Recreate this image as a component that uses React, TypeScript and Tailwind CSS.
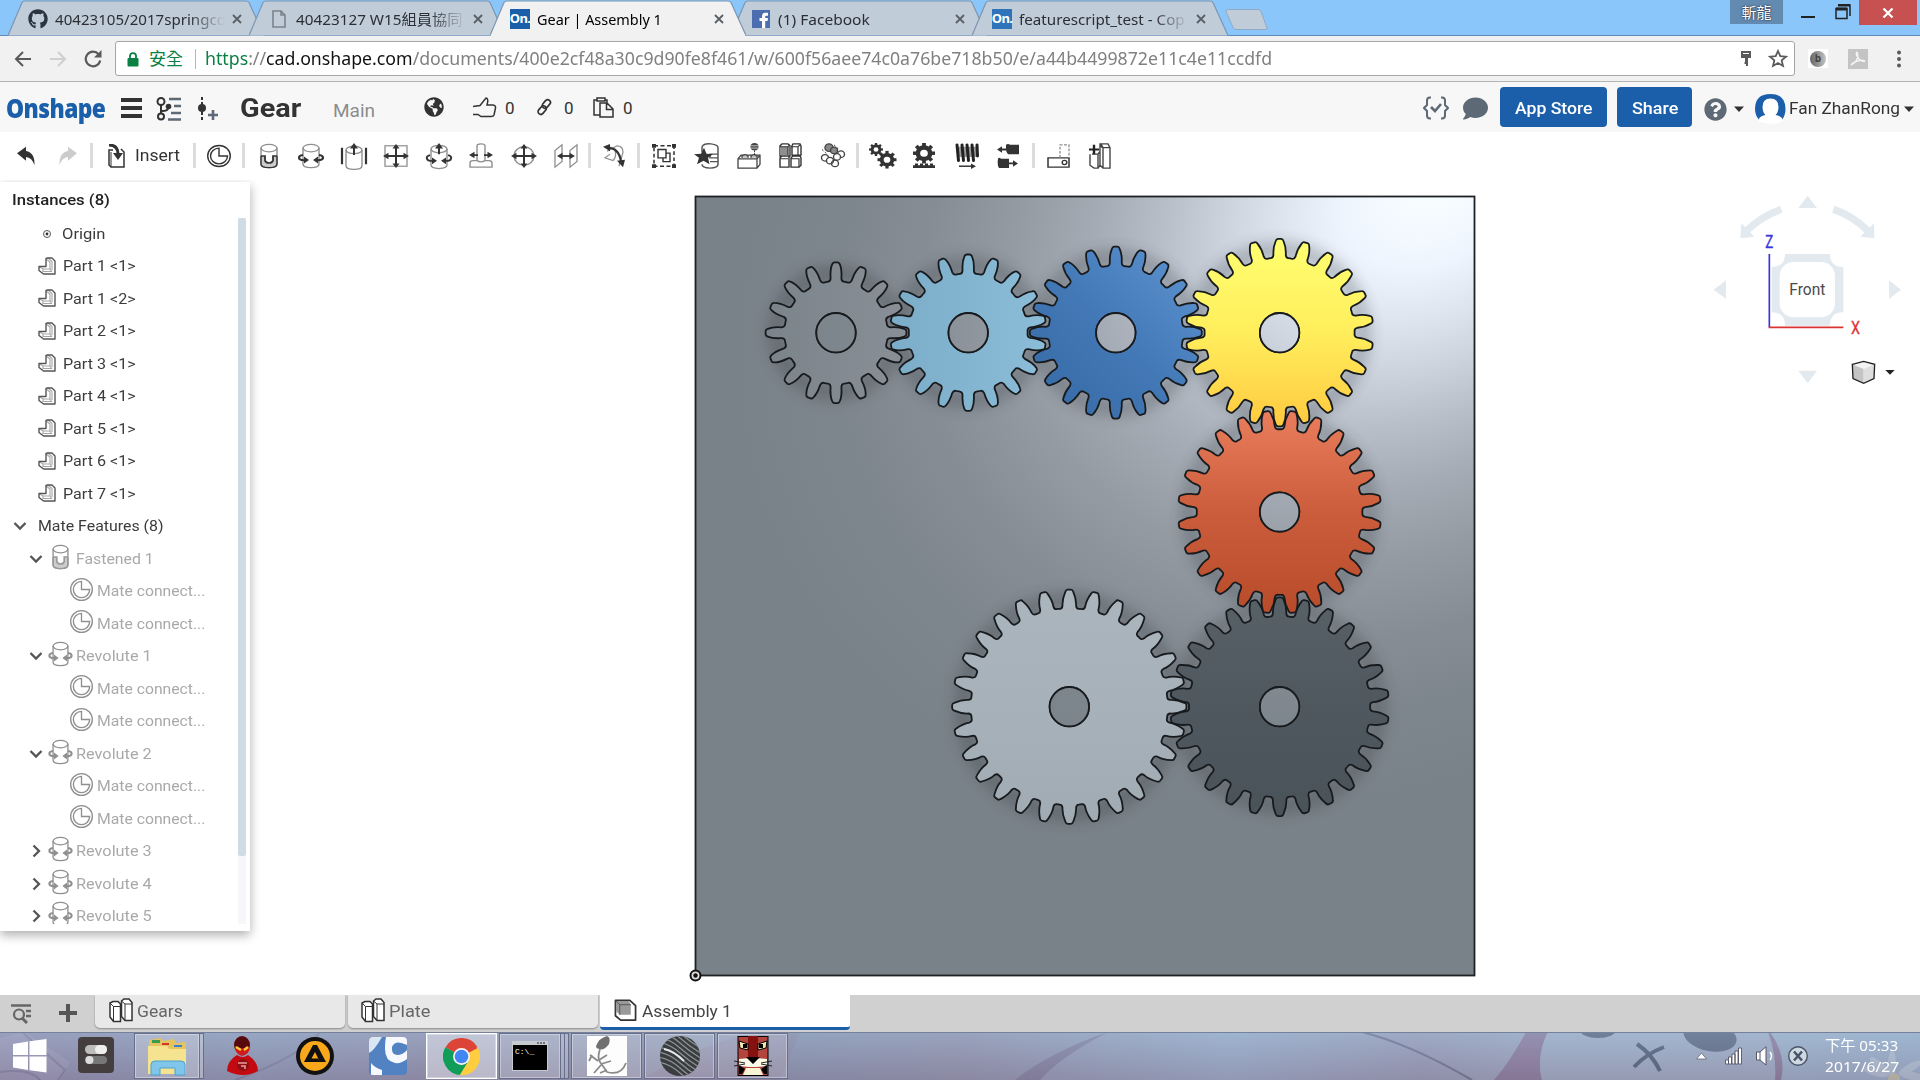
import React, { useLayoutEffect, useRef, useState } from "react";
import { FaGithub, FaGlobeAmericas, FaQuestionCircle, FaComment } from "react-icons/fa";

const UI = "font-['Roboto','Noto_Sans',sans-serif]";
const WIN = "font-['Noto_Sans','Noto_Sans_CJK_TC',sans-serif]";

/* Text fitted to a given advance width. */
function Fit({ w, className = "", children }: { w: number; className?: string; children: React.ReactNode }) {
  const ref = useRef<HTMLSpanElement>(null);
  const [s, setS] = useState(1);
  useLayoutEffect(() => {
    if (ref.current) setS(w / ref.current.offsetWidth);
  }, [w]);
  return (
    <span className={"inline-block shrink-0 whitespace-nowrap " + className} style={{ width: w }}>
      <span ref={ref} className="inline-block origin-left" style={{ transform: `scaleX(${s})` }}>
        {children}
      </span>
    </span>
  );
}

/* ---------- Browser tabs ---------- */

function OnIcon({ className = "" }: { className?: string }) {
  return (
    <span className={"flex h-[20px] w-[20px] items-center justify-center text-[13px] font-bold leading-none tracking-tighter text-white " + className}>
      On.
    </span>
  );
}

function Tab({ active, icon, label, w, fade, first }: { active?: boolean; icon: React.ReactNode; label: string; w: number; fade?: boolean; first?: boolean }) {
  return (
    <div className={"relative h-[36px] w-[256px] shrink-0 " + (first ? "" : "-ml-[15px] ") + (active ? "z-10" : "")}>
      <svg className="absolute inset-0" width="256" height="36" viewBox="0 0 256 36">
        <path d="M0 35.5 L14 2.5 Q15 1 17 1 H238 Q240 1 241 2.5 L256 35.5" fill={active ? "#f1f1f1" : "#c1ccd9"} stroke="#7c95b1" strokeWidth="1.2" />
        {active && <path d="M1 35.5H255" stroke="#f1f1f1" strokeWidth="2" />}
      </svg>
      <div className="relative flex h-[36px] items-center pl-[20px] pt-[1px]">
        <div className="flex w-[20px] items-center justify-center">{icon}</div>
        <div className="ml-[7px] w-[170px] overflow-hidden">
          <Fit w={w} className={"text-[15px] " + (active ? "text-black" : "text-[#2b2f35]")}>{label}</Fit>
        </div>
        {fade && <div className="relative -ml-[36px] h-[24px] w-[36px] bg-gradient-to-r from-[#c1ccd9]/0 to-[#c1ccd9]" />}
        <svg className="ml-[7px]" width="10" height="10" viewBox="0 0 10 10">
          <path d="M1 1L9 9M9 1L1 9" stroke="#5a5f66" strokeWidth="1.8" />
        </svg>
      </div>
    </div>
  );
}

function TabStrip() {
  return (
    <div className={"flex h-[36px] items-start border-b border-[#6189b8] bg-[#8bc6fa] pl-[8px] " + WIN}>
      <Tab first icon={<FaGithub className="text-[20px] text-[#2b3542]" />} label="40423105/2017springcd" w={171} fade />
      <Tab
        icon={
          <svg width="14" height="18" viewBox="0 0 14 18"><path d="M1 1h8l4 4v12H1zM9 1v4h4" fill="none" stroke="#7b828b" strokeWidth="1.6" /></svg>
        }
        label="40423127 W15組員協同"
        w={167}
        fade
      />
      <Tab active icon={<OnIcon className="bg-[#1b5faa]" />} label="Gear | Assembly 1" w={125} />
      <Tab
        icon={
          <svg width="18" height="18" viewBox="0 0 18 18"><rect width="18" height="18" fill="#4c6eb0" /><path d="M10 18V11H7.5V8H10V6.2Q10 2.8 13.3 2.8H16V5.8H14.2Q13.2 5.8 13.2 6.8V8H16L15.5 11H13.2V18Z" fill="#fff" /></svg>
        }
        label="(1) Facebook"
        w={92}
      />
      <Tab icon={<OnIcon className="bg-[#2f74bb]" />} label="featurescript_test - Cop" w={166} fade />
      <svg className="mt-[8px] -ml-[4px]" width="46" height="23" viewBox="0 0 46 23">
        <path d="M4 1.5H34Q36 1.5 37 3.5L43 20Q43.500 21.500 42 21.500H12Q10 21.500 9 19.500L2 3.500Q1.500 1.500 4 1.500Z" fill="#c1ccd9" stroke="#8fa9c6" />
      </svg>
      <div className="ml-auto flex items-start">
        <div className="flex h-[24px] w-[53px] items-center justify-center bg-[#638bb1] text-[15px] text-white [text-shadow:0_0_2px_#000]">斬龍</div>
        <div className="ml-[18px] mt-[16px] h-[2px] w-[14px] bg-[#222]" />
        <svg className="ml-[20px] mt-[4px]" width="16" height="16" viewBox="0 0 16 16">
          <path d="M3 1H15V12M1 4.500H12V14.500H1Z" fill="none" stroke="#222" strokeWidth="1.500" /><path d="M1 5H12M3 1H15" stroke="#222" strokeWidth="3" />
        </svg>
        <div className="ml-[8px] mr-[3px] flex h-[25px] w-[58px] items-center justify-center bg-[#c75050]">
          <svg width="12" height="10" viewBox="0 0 12 10"><path d="M1.500 0.500L10.500 9.500M10.500 0.500L1.500 9.500" stroke="#fff" strokeWidth="2.200" /></svg>
        </div>
      </div>
    </div>
  );
}

function AddressBar() {
  return (
    <div className={"flex h-[46px] items-center border-b border-[#b3b3b3] bg-[#f1f1f1] " + WIN}>
      <svg className="ml-[14px]" width="18" height="18" viewBox="0 0 18 18"><path d="M17 9H2M9 2L2 9L9 16" fill="none" stroke="#5a5a5a" strokeWidth="2" /></svg>
      <svg className="ml-[17px]" width="18" height="18" viewBox="0 0 18 18"><path d="M1 9H16M9 2L16 9L9 16" fill="none" stroke="#cfcfcf" strokeWidth="2" /></svg>
      <svg className="ml-[16px]" width="20" height="20" viewBox="0 0 20 20"><path d="M15.600 5.200A7.300 7.300 0 1 0 17.200 11.500" fill="none" stroke="#5a5a5a" strokeWidth="2.200" /><path d="M18.500 1V8.500H11Z" fill="#5a5a5a" /></svg>
      <div className="ml-[12px] flex h-[35px] w-[1680px] items-center rounded-[3px] border border-[#a6a6a6] bg-white">
        <svg className="ml-[11px] mt-[2px]" width="12" height="15" viewBox="0 0 12 15"><path d="M3 7V4Q3 1.200 6 1.200T9 4V7" fill="none" stroke="#0b8043" strokeWidth="1.800" /><rect x="0.500" y="6" width="11" height="8.500" rx="1" fill="#0b8043" /></svg>
        <Fit w={34} className="ml-[10px] text-[17px] text-[#0b8043]">安全</Fit>
        <div className="ml-[12px] h-[20px] w-px bg-[#b5b5b5]" />
        <Fit w={1067} className="ml-[9px] text-[18px] text-[#808080]">
          <span className="text-[#0b8043]">https</span>://<span className="text-[#111]">cad.onshape.com</span>/documents/400e2cf48a30c9d90fe8f461/w/600f56aee74c0a76be718b50/e/a44b4499872e11c4e11ccdfd
        </Fit>
        <svg className="ml-auto" width="12" height="18" viewBox="0 0 12 18"><path d="M1 1H11V8H8V16H6V14H4.500V12H5V8H1Z" fill="#5a5a5a" /><path d="M3 3.500H9" stroke="#fff" /></svg>
        <svg className="ml-[16px] mr-[6px]" width="20" height="19" viewBox="0 0 20 19"><path d="M10 2L12.300 7.200L18 7.700L13.700 11.400L15 17L10 14L5 17L6.300 11.400L2 7.700L7.700 7.200Z" fill="none" stroke="#5a5a5a" strokeWidth="1.800" /></svg>
      </div>
      <div className="ml-[13px] flex h-[19px] w-[20px] items-center justify-center bg-white">
        <div className="flex h-[16px] w-[16px] items-center justify-center rounded-full bg-gradient-to-r from-[#666] to-[#c4c4c4] text-[10px] font-bold text-[#444]">b</div>
      </div>
      <svg className="ml-[20px]" width="20" height="20" viewBox="0 0 20 20"><rect width="20" height="20" fill="#c4c4c4" /><path d="M3 16Q11 12 9.500 4Q8 2 8.500 6Q11 12 16.500 12.500Q17 11 12 11.500Q6 12.500 3 16Z" fill="none" stroke="#f4f4f4" strokeWidth="1.500" /></svg>
      <svg className="ml-[28px]" width="6" height="18" viewBox="0 0 6 18"><circle cx="3" cy="2.500" r="2" fill="#5a5a5a" /><circle cx="3" cy="9" r="2" fill="#5a5a5a" /><circle cx="3" cy="15.500" r="2" fill="#5a5a5a" /></svg>
    </div>
  );
}

/* ---------- Document header ---------- */

function Caret({ className = "" }: { className?: string }) {
  return <svg className={"shrink-0 " + className} width="10" height="6" viewBox="0 0 10 6"><path d="M0 0.500H10L5 6Z" fill="#333" /></svg>;
}

function DocHeader() {
  return (
    <div className={"flex h-[50px] items-center bg-[#f7f7f7] text-[#333] " + UI}>
      <Fit w={99} className="ml-[6px] mt-[2px] font-['Open_Sans','Noto_Sans',sans-serif] text-[26px] font-extrabold leading-none tracking-tight text-[#1b5faa]">Onshape</Fit>
      <div className="ml-[16px] mt-[2px] flex w-[21px] flex-col gap-[4px]">
        <div className="h-[4px] bg-[#333]" /><div className="h-[4px] bg-[#333]" /><div className="h-[4px] bg-[#333]" />
      </div>
      <svg className="ml-[14px] mt-[3px]" width="26" height="24" viewBox="0 0 26 24">
        <g fill="none" stroke="#333" strokeWidth="2"><circle cx="5" cy="4.500" r="3.500" /><circle cx="5" cy="19.500" r="3" /><path d="M5 8V17M6 14Q12 14 12 11" /></g><circle cx="12.500" cy="9.500" r="2.800" fill="#333" />
        <path d="M13 2H25M18 9H25M15 16H25M12 22.500H25" stroke="#5d6a75" strokeWidth="2.400" />
      </svg>
      <svg className="ml-[15px] mt-[3px]" width="22" height="24" viewBox="0 0 22 24">
        <path d="M5 0V24" stroke="#333" strokeWidth="2" strokeDasharray="3 2" /><circle cx="5" cy="11" r="4" fill="#333" /><path d="M11 18H21M16 13V23" stroke="#5d6a75" strokeWidth="2.600" />
      </svg>
      <Fit w={61} className="ml-[21px] mt-[2px] text-[26px] font-bold leading-none">Gear</Fit>
      <Fit w={42} className="ml-[32px] mt-[7px] text-[19px] leading-none text-[#8c8c8c]">Main</Fit>
      <FaGlobeAmericas className="ml-[49px] text-[20px]" />
      <svg className="ml-[28px]" width="25" height="21" viewBox="0 0 25 21"><path d="M1 9.500L8 8.500L14 1Q17 1.500 15 8H21Q24 8.500 23.500 11L22 18Q21.500 19.500 19 19.500H9L6 17.500H1" fill="none" stroke="#333" strokeWidth="1.500" /></svg>
      <Fit w={10} className="ml-[8px] mt-[3px] text-[17px]">0</Fit>
      <svg className="ml-[21px]" width="16" height="18" viewBox="0 0 16 18"><g fill="none" stroke="#333" strokeWidth="1.700"><rect x="7.500" y="1" width="5.500" height="9.500" rx="2.700" transform="rotate(40 10 6)" /><rect x="3.500" y="7.500" width="5.500" height="9.500" rx="2.700" transform="rotate(40 6.500 12)" /></g></svg>
      <Fit w={10} className="ml-[12px] mt-[3px] text-[17px]">0</Fit>
      <svg className="ml-[19px]" width="21" height="21" viewBox="0 0 21 21"><g fill="none" stroke="#333" strokeWidth="1.500"><path d="M7 18H1V3H4M12 3H14V6M4 1H12V4H4ZM7 6H14L20 12V20H7ZM13.500 6V12.500H20" /></g></svg>
      <Fit w={10} className="ml-[9px] mt-[3px] text-[17px]">0</Fit>

      <div className="ml-auto flex items-center">
        <svg className="mt-[2px]" width="26" height="24" viewBox="0 0 26 24"><path d="M8 1.500H7Q4 1.500 4 4.500V9L1 12L4 15V19.500Q4 22.500 7 22.500H8M18 1.500H19Q22 1.500 22 4.500V9L25 12L22 15V19.500Q22 22.500 19 22.500H18" fill="none" stroke="#5d6a75" strokeWidth="2" /><path d="M8 11L12 15L18 8" fill="none" stroke="#5d6a75" strokeWidth="2.600" /></svg>
        <FaComment className="ml-[14px] mt-[3px] text-[25px] text-[#5d6a75]" />
        <div className="ml-[12px] flex h-[40px] w-[107px] items-center justify-center rounded-[4px] bg-[#1b5faa] pt-[3px] text-white"><Fit w={77} className="text-[16px] font-medium">App Store</Fit></div>
        <div className="ml-[10px] flex h-[40px] w-[75px] items-center justify-center rounded-[4px] bg-[#1b5faa] pt-[3px] text-white"><Fit w={46} className="text-[16px] font-medium">Share</Fit></div>
        <FaQuestionCircle className="ml-[12px] mt-[4px] text-[23px] text-[#5d6a75]" />
        <Caret className="ml-[7px] mt-[3px]" />
        <svg className="ml-[11px] mt-[4px]" width="31" height="30" viewBox="0 0 31 30"><path d="M4 26Q0 21 0 15Q0 0 15.500 0Q30.500 0 30.500 15Q30.500 21 27 26Z" fill="#1b5faa" /><path d="M15.500 4.500Q23.500 4.500 23.500 13Q23.500 18 20.500 21Q27 22 28 27Q22 30 15.500 30T3 27Q4 22 10.500 21Q7.500 18 7.500 13Q7.500 4.500 15.500 4.500Z" fill="#fff" /></svg>
        <Fit w={111} className="ml-[3px] mt-[4px] text-[16.500px]">Fan ZhanRong</Fit>
        <Caret className="ml-[4px] mr-[6px] mt-[4px]" />
      </div>
    </div>
  );
}

/* ---------- Tool icons ---------- */

const D = "#333";
const G = "#8f8f8f";

function Ico({ className = "", children }: { className?: string; children: React.ReactNode }) {
  return <svg className={"-mt-[1px] shrink-0 overflow-visible " + className} width="24" height="26" viewBox="0 0 24 28" preserveAspectRatio="none" fill="none">{children}</svg>;
}
const Sep = ({ className }: { className: string }) => <div className={"-mt-[1px] h-[25px] w-[3px] shrink-0 bg-[#dcdcdc] " + className} />;

function Cyl({ c = G }: { c?: string }) {
  return <g stroke={c} strokeWidth="1.400"><ellipse cx="12" cy="5.500" rx="8" ry="4" /><path d="M4 5.500V22.500Q4 26.500 12 26.500T20 22.500V5.500" /></g>;
}
function FastenedArt({ c = D }: { c?: string }) {
  return <><path d="M4 14V22.500Q4 26.500 12 26.500T20 22.500V14H16V19Q15 21 12 21T8 19V14Z" fill="#ccc" /><Cyl /><path d="M4 14H8V19Q9 21.500 12 21.500T16 19V14H20" stroke={c} strokeWidth="1.800" /><path d="M4 14V22.500Q4 26.500 12 26.500T20 22.500V14" stroke={c} strokeWidth="1.300" /></>;
}
function RevoluteArt({ c = D }: { c?: string }) {
  return <><Cyl c={c === D ? G : c} /><path d="M4 13Q0 13.500 0 16T5 18.500M20 13Q24 13.500 24 16T19 18.500" stroke={c} strokeWidth="2.200" /><path d="M5 14.500L10 18.300L5 22ZM19 14.500L14 18.300L19 22Z" fill={c} /></>;
}
function MateArt({ c = D }: { c?: string }) {
  return <g stroke={c} strokeWidth="1.400"><circle cx="12" cy="14" r="11.300" /><path d="M12 5.500V14H20.500A8.500 8.500 0 1 1 12 5.500Z" /></g>;
}
function Cog({ x, y, r, n }: { x: number; y: number; r: number; n: number }) {
  return <g transform={`translate(${x} ${y})`}><circle r={r * 0.56} stroke={D} strokeWidth={r * 0.42} />{Array.from({ length: n }, (_, i) => <rect key={i} x={-r * 0.17} y={-r} width={r * 0.34} height={r * 0.42} fill={D} transform={`rotate(${(i * 360) / n})`} />)}</g>;
}
const Four = () => <><path d="M12 4V24M2 14H22" stroke={D} strokeWidth="2" /><path d="M12 1L15.500 6H8.500ZM12 27L15.500 22H8.500ZM-1 14L4.500 10.500V17.500ZM25 14L19.500 10.500V17.500Z" fill={D} /></>;

function ToolBar() {
  return (
    <div className={"flex h-[48px] items-center text-[#333] " + UI}>
      <Ico className="ml-[15px]"><path d="M2 11L11 4V8.500Q20 10 19.500 24Q17 15.500 11 15V19Z" fill={D} /></Ico>
      <Ico className="ml-[16px]"><path d="M22 11L13 4V8.500Q4 10 4.500 24Q7 15.500 13 15V19Z" fill="#ccc" /></Ico>
      <Sep className="ml-[11px]" />
      <svg className="-mt-[1px] ml-[15px]" width="18" height="24" viewBox="0 0 18 24" fill="none"><path d="M5 6H1V21L3 23H16V8L13 5" stroke={D} strokeWidth="1.500" /><path d="M3 8V23" stroke={D} /><path d="M1 1Q10 1 10 10" stroke={D} strokeWidth="3" /><path d="M5 9H15L10 16Z" fill={D} /></svg>
      <Fit w={45} className="ml-[9px] text-[16px]">Insert</Fit>
      <Sep className="ml-[13px]" />
      <Ico className="ml-[11px]"><MateArt /></Ico>
      <Sep className="ml-[11px]" />
      <Ico className="ml-[12px]"><FastenedArt /></Ico>
      <Ico className="ml-[18px]"><RevoluteArt /></Ico>
      <Ico className="ml-[19px]"><g transform="translate(0 2)"><Cyl /></g><path d="M0 5V23M24 5V23" stroke={D} strokeWidth="2.200" /><path d="M12 13V4" stroke={D} strokeWidth="2" /><path d="M12 0L16 6H8Z" fill={D} /></Ico>
      <Ico className="ml-[18px]"><rect x="1" y="3" width="22" height="22" stroke={G} strokeWidth="1.300" /><Four /></Ico>
      <Ico className="ml-[19px]"><g transform="translate(0 1)"><Cyl /></g><path d="M3 13Q-1 14 0 17T5 19M21 13Q25 14 24 17T19 19M12 12V5" stroke={D} strokeWidth="2" /><path d="M12 0L16 6H8ZM5 15.500L10 19L5 23ZM19 15.500L14 19L19 23Z" fill={D} /></Ico>
      <Ico className="ml-[18px]"><path d="M8 3Q8 1 12 1T16 3V19H20Q23 19 23 22V26H1V22Q1 19 4 19H8ZM8 19Q12 21.500 16 19" stroke={G} strokeWidth="1.400" /><path d="M4 13H9M15 13H20" stroke={D} strokeWidth="2" /><path d="M0 13L5.500 9.500V16.500ZM24 13L18.500 9.500V16.500Z" fill={D} /></Ico>
      <Ico className="ml-[19px]"><circle cx="12" cy="14" r="10" stroke={G} strokeWidth="1.400" /><Four /></Ico>
      <Ico className="ml-[18px]"><path d="M1 8L8 2V20L1 26ZM16 8L23 2V20L16 26Z" stroke={G} strokeWidth="1.300" /><path d="M5 14H19" stroke={D} strokeWidth="2" /><path d="M3 14L8.500 10.500V17.500ZM21 14L15.500 10.500V17.500Z" fill={D} /></Ico>
      <Sep className="ml-[10px]" />
      <Ico className="ml-[12px]"><path d="M4 9L14 3Q20 3 20 10L16 25M7 12L2 16L10 19Q14 14 12 8" stroke={G} strokeWidth="1.300" /><path d="M4 5Q16 5 18 20" stroke={D} strokeWidth="2.200" /><path d="M0 4L7 1V9ZM20 26L14 19L22 18Z" fill={D} /></Ico>
      <Sep className="ml-[10px]" />
      <Ico className="ml-[12px]"><rect x="2" y="3" width="20" height="22" stroke={D} strokeWidth="1.500" strokeDasharray="4 2.500" /><path d="M0 1h4v4H0zM20 1h4v4h-4zM0 23h4v4H0zM20 23h4v4h-4z" fill={D} /><path d="M6 7H14V16H6ZM14 11H18V20H11V16" stroke={D} strokeWidth="1.400" /></Ico>
      <Ico className="ml-[20px]"><path d="M6 4Q8 0 15 1T22 5V23Q22 27 14 27T6 23M6 4V10M22 12H14V16H22M22 20H14" stroke="#555" strokeWidth="1.500" /><path d="M8 5L10.500 11.500L17 12L12 16L13.500 23L7.500 19L1 23L3 16L-2 12L5 11.500Z" fill={D} /></Ico>
      <Ico className="ml-[17px]"><path d="M1 17L4 13H23V23L20 27H1ZM1 17H20V27M20 17L23 13" stroke="#444" strokeWidth="1.300" /><path d="M5 16V14Q8 11 11 14V16M14 16V14Q17 11 20 14V16" stroke="#444" strokeWidth="1.400" fill="#bbb" /><circle cx="17.500" cy="4" r="4" fill="#444" /><path d="M14 3H21M14 5.500H21" stroke="#fff" strokeWidth=".7" /><path d="M17.500 8V13" stroke={D} strokeDasharray="2 1" /></Ico>
      <Ico className="ml-[17px]"><path d="M2 3L4 1H10L12 3V14H2ZM14 3L15 1H22L23 3V13H14ZM2 16L4 14H11V26H2ZM13 16L15 14H22L23 16V24L21 26H13Z" stroke={D} strokeWidth="1.400" /><path d="M2 4H10V13H2Z" fill="#8f8f8f" /><path d="M2 4H10V13M13 4H20V13M2 17H10M13 17H21V26M10 4L12 2M20 4L22 2" stroke={D} strokeWidth="1.200" /></Ico>
      <Ico className="ml-[19px]"><g stroke="#444" strokeWidth="1.400"><circle cx="8" cy="5" r="4" fill="#888" /><circle cx="13" cy="8" r="3.500" fill="#888" /><circle cx="20" cy="12" r="3.500" /><circle cx="16" cy="15" r="3.500" fill="#fff" /><circle cx="4" cy="16" r="3.500" /><circle cx="9" cy="19" r="3.500" fill="#fff" /><circle cx="14" cy="22" r="3.500" /></g><path d="M1 7L6 12M13 2L18 7" stroke={D} strokeDasharray="2 2" /></Ico>
      <Sep className="ml-[11px]" />
      <Ico className="ml-[12px]"><Cog x={5} y={7} r={7} n={8} /><Cog x={16} y={18} r={9.5} n={8} /></Ico>
      <Ico className="ml-[17px]"><Cog x={12} y={11} r={11} n={8} /><path d="M1 27V24H3V22H6V24H8V22H11V24H13V22H16V24H18V22H21V24H23V27Z" fill={D} /></Ico>
      <Ico className="ml-[19px]"><path d="M2 4H22V15H2Z" fill="#999" /><path d="M2 2L3.500 19M7 2L8.500 19M12 2L13.500 19M17 2L18.500 19M22 2L22.500 14" stroke="#222" strokeWidth="3" strokeLinecap="round" /><path d="M4 25H17" stroke={D} strokeWidth="1.600" /><path d="M21 25L16 22V28Z" fill={D} /></Ico>
      <Ico className="ml-[18px]"><path d="M9 2Q11 0 13 2H22V12H11Q9 10 9 7ZM1 17Q2 15 4 17H12V27H2Q0 24 1 17Z" fill={D} /><path d="M3 7H9M12 22H18" stroke={D} strokeWidth="2" /><path d="M0 7L5 3.500V10.500ZM21 22L16 18.500V25.500Z" fill={D} /></Ico>
      <Sep className="ml-[11px]" />
      <Ico className="ml-[12px]"><path d="M1 16H22V26H1Z" stroke={D} strokeWidth="1.500" /><path d="M13 16V2H22V16" stroke={G} strokeWidth="1.300" strokeDasharray="3 1.500" /><circle cx="17.500" cy="21" r="2.300" stroke={D} strokeWidth="1.400" /></Ico>
      <Ico className="ml-[18px]"><path d="M3 12H9V27H5L1 24V12M9 12L11 9V24L9 27M13 5L11 2V24L14 27H21V5L19 1H12L14 5H21M14 5V27" stroke="#444" strokeWidth="1.400" /><path d="M0 7H10M5 2V12" stroke="#222" strokeWidth="2.400" /></Ico>
    </div>
  );
}

/* ---------- Instance list ---------- */

function Chevron({ open }: { open?: boolean }) {
  return <svg className="shrink-0" width="14" height="14" viewBox="0 0 14 14"><path d={open ? "M1.500 4L7 9.500L12.500 4" : "M4.500 1.500L10 7L4.500 12.500"} fill="none" stroke="#555" strokeWidth="2.300" /></svg>;
}
const Row = ({ className, children }: { className: string; children: React.ReactNode }) => <div className={"flex h-[32.500px] shrink-0 items-center " + className}>{children}</div>;

function Sidebar() {
  const parts = ["Part 1 <1>", "Part 1 <2>", "Part 2 <1>", "Part 3 <1>", "Part 4 <1>", "Part 5 <1>", "Part 6 <1>", "Part 7 <1>"];
  const mates = [["Fastened 1", true], ["Revolute 1", true], ["Revolute 2", true], ["Revolute 3", false], ["Revolute 4", false], ["Revolute 5", false]] as [string, boolean][];
  return (
    <aside className={"mt-[2px] h-[749px] w-[250px] shrink-0 bg-white text-[#3c3c3c] shadow-[0_4px_10px_rgba(0,0,0,0.32)] " + UI}>
      <div className="flex h-[36px] items-center pl-[12px] pt-[1px]"><Fit w={98} className="text-[15.500px] font-medium text-[#222]">Instances (8)</Fit></div>
      <div className="flex h-[706px]">
        <div className="flex w-[238px] flex-col overflow-hidden text-[15px] leading-[14px]">
          <Row className="-mt-[0.500px] pl-[42px]">
            <svg width="10" height="10" viewBox="0 0 10 10"><circle cx="5" cy="5" r="3.500" fill="none" stroke="#555" /><circle cx="5" cy="5" r="1.400" fill="#333" /></svg>
            <Fit w={43} className="ml-[10px]">Origin</Fit>
          </Row>
          {parts.map((p) => (
            <Row key={p} className="pl-[38px]">
              <svg className="-mt-[1px]" width="18" height="18" viewBox="0 0 18 18" fill="none"><path d="M8 2L12 5V12H5L1 9.500M12 12L13.500 14.500H5V12M10 1L14 4.500V13" stroke="#a5a5a5" strokeWidth="1.100" /><path d="M1 9.500H8V1.500L9.500 1H14L17 4V17H5.500L1 13.500Z" stroke="#555" strokeWidth="1.400" strokeLinejoin="round" /></svg>
              <Fit w={73} className="ml-[6.500px]">{p}</Fit>
            </Row>
          ))}
          <Row className="pl-[13px]"><Chevron open /><Fit w={125} className="ml-[10.500px]">Mate Features (8)</Fit></Row>
          {mates.map(([m, open], i) => (
            <React.Fragment key={m}>
              <Row className="pl-[29px] text-[#a9a9a9]">
                <Chevron open={open} />
                <svg className="ml-[6px] -mt-[4px] overflow-visible" width="23" height="26" viewBox="0 0 24 28" fill="none">{i === 0 ? <FastenedArt c="#999" /> : <RevoluteArt c="#8f8f8f" />}</svg>
                <Fit w={i === 0 ? 78 : 76} className="ml-[4px]">{m}</Fit>
              </Row>
              {open && [0, 1].map((k) => (
                <Row key={k} className="pl-[70px] text-[#a9a9a9]">
                  <svg className="-mt-[4px]" width="23" height="27" viewBox="0 0 24 28" fill="none"><MateArt c="#8f8f8f" /></svg>
                  <Fit w={108} className="ml-[4px]">Mate connect...</Fit>
                </Row>
              ))}
            </React.Fragment>
          ))}
        </div>
        <div className="h-full w-[8px] bg-[#f5f7fa]"><div className="h-[638px] rounded-[2px] bg-[#cfdce6]" /></div>
      </div>
    </aside>
  );
}

/* ---------- 3D view ---------- */

const MODULE = 7.79;

function gearPath(cx: number, cy: number, n: number, phase: number) {
  const rp = (n * MODULE) / 2;
  const ra = rp + MODULE + 0.3;
  const rr = rp - 10.7;
  const at = (r: number, a: number) => `${(cx + r * Math.cos(a)).toFixed(2)} ${(cy - r * Math.sin(a)).toFixed(2)}`;
  const base = Math.min(6.8, 5.4 + (n - 16) * 0.13);
  let d = "";
  for (let i = 0; i < n; i++) {
    const c = ((phase + i) * 2 * Math.PI) / n;
    const q = (r: number, u: number) => at(r, c + u / r);
    const h = Math.PI / n;
    d += (i ? "L" : "M") + at(rr, c - h);
    d += `L${q(rr, -base - 2.6)}Q${q(rr, -base - 0.3)} ${q(rr + 3, -base)}`;
    d += `C${q(rr + 6, -base - 0.2)} ${q(rp + 1, -6.1)} ${q(ra - 2, -3.9)}Q${q(ra, -3.2)} ${q(ra, -1.6)}`;
    d += `L${q(ra, 1.6)}Q${q(ra, 3.2)} ${q(ra - 2, 3.9)}`;
    d += `C${q(rp + 1, 6.1)} ${q(rr + 6, base + 0.2)} ${q(rr + 3, base)}Q${q(rr, base + 0.3)} ${q(rr, base + 2.6)}`;
  }
  d += "Z";
  const k = 19.7;
  d += `M${cx - k} ${cy}a${k} ${k} 0 1 0 ${2 * k} 0a${k} ${k} 0 1 0 ${-2 * k} 0Z`;
  return d;
}

const GEARS: { x: number; y: number; n: number; ph: number; fill: string }[] = [
  { x: 836, y: 332.7, n: 16, ph: 0, fill: "url(#g1)" },
  { x: 1115.8, y: 332.7, n: 20, ph: 0, fill: "url(#g3)" },
  { x: 968.2, y: 332.7, n: 18, ph: 0.5, fill: "url(#g2)" },
  { x: 1279.6, y: 706.7, n: 26, ph: 0.5, fill: "url(#g6)" },
  { x: 1279.6, y: 512, n: 24, ph: 0.5, fill: "url(#g5)" },
  { x: 1279.6, y: 332.7, n: 22, ph: 0.5, fill: "url(#g4)" },
  { x: 1069.3, y: 706.7, n: 28, ph: 0, fill: "url(#g7)" },
];

function Lin({ id, a, m, b, d = "0,1" }: { id: string; a: string; m?: string; b: string; d?: string }) {
  const [x, y] = d.split(",");
  return <linearGradient id={id} x1="0" y1={y === "-1" ? "1" : "0"} x2={x} y2={y === "-1" ? "0" : y}><stop offset="0" stopColor={a} />{m && <stop offset=".5" stopColor={m} />}<stop offset="1" stopColor={b} /></linearGradient>;
}

function Viewport() {
  return (
    <svg className="ml-[436px] shrink-0" width="799" height="814" viewBox="686 180 799 814">
      <defs>
        <radialGradient id="shine" gradientUnits="userSpaceOnUse" cx="0" cy="0" r="1" gradientTransform="translate(1435 185) rotate(146) scale(760 560)">
          <stop offset="0" stopColor="#f8ffff" /><stop offset=".13" stopColor="#eff5fe" /><stop offset=".22" stopColor="#dde4ee" /><stop offset=".3" stopColor="#ccd3dd" /><stop offset=".38" stopColor="#b9c0ca" />
          <stop offset=".48" stopColor="#a5acb5" /><stop offset=".6" stopColor="#949ba3" /><stop offset=".73" stopColor="#868d95" /><stop offset=".86" stopColor="#7e868d" /><stop offset="1" stopColor="#7a8289" />
        </radialGradient>
        <Lin id="g1" a="#7c848b" b="#888f97" d="1,0" />
        <Lin id="g2" a="#7badc8" b="#8bbdd9" d="1,0" />
        <Lin id="g3" a="#3368a4" m="#4479b7" b="#5f95d2" d="1,-1" />
        <Lin id="g4" a="#ffff70" m="#ffee5c" b="#ffc93f" />
        <Lin id="g5" a="#ea7d5c" m="#cb5d3c" b="#b84b29" />
        <Lin id="g6" a="#596168" m="#50585f" b="#4a525a" />
        <Lin id="g7" a="#abb5be" m="#a7b1ba" b="#a1abb4" />
        <filter id="sh" x="-20%" y="-20%" width="140%" height="140%"><feGaussianBlur stdDeviation="7" /></filter>
        <clipPath id="clip"><rect x="696" y="196" width="779" height="780" /></clipPath>
      </defs>
      <rect x="695.500" y="196.500" width="779" height="779" fill="url(#shine)" stroke="#1d2125" strokeWidth="1.800" />
      <g clipPath="url(#clip)" filter="url(#sh)" opacity=".24">
        {GEARS.map((g, i) => <circle key={i} cx={g.x} cy={g.y} r={(g.n * MODULE) / 2 - 3} fill="none" stroke="#20262c" strokeWidth="18" />)}
      </g>
      {GEARS.map((g, i) => (
        <path key={i} d={gearPath(g.x, g.y, g.n, g.ph)} fill={g.fill} fillRule="evenodd" stroke="#181b1e" strokeWidth="1.800" strokeLinejoin="round" />
      ))}
      {GEARS.map((g, i) => <circle key={i} cx={g.x} cy={g.y} r="19.700" fill="url(#shine)" stroke="#181b1e" strokeWidth="1.800" />)}
      <circle cx="695.500" cy="975.500" r="5" fill="#ddd" stroke="#111" strokeWidth="2" /><circle cx="695.500" cy="975.500" r="2.200" fill="#111" />
    </svg>
  );
}

function ViewCube() {
  const c = "#e2e9ef";
  return (
    <svg className="ml-[195px] shrink-0" width="240" height="240" viewBox="0 30 720 720" fill={c}>
      <path d="M383 77L411 114H355ZM383 640L411 602H355ZM101 359L138 331V387ZM663 359L627 331V387Z" />
      <path d="M304 118Q245 138 200 182M460 118Q515 136 566 184" fill="none" stroke={c} strokeWidth="22" />
      <path d="M184 160L181 205L223 200ZM582 160L583 205L541 200Z" />
      <path d="M315 252H450Q450 291 490 291V427Q450 427 450 467H315Q315 427 275 427V291Q315 291 315 252Z" />
      <rect x="299" y="276" width="166" height="166" rx="42" fill="#fff" />
      <path d="M268 252V472" stroke="#3a35d8" strokeWidth="5" /><path d="M266 472H490" stroke="#dc3434" strokeWidth="5" />
      <g className="font-['Roboto',sans-serif]">
        <text x="256" y="234" fontSize="54" fill="#3a35d8" stroke="#3a35d8" textLength="24" lengthAdjust="spacingAndGlyphs">Z</text>
        <text x="513" y="492" fontSize="54" fill="#dc3434" stroke="#dc3434" textLength="27" lengthAdjust="spacingAndGlyphs">X</text>
        <text x="328" y="376" fontSize="47" fill="#4a4a4a" textLength="108" lengthAdjust="spacingAndGlyphs">Front</text>
      </g>
      <path d="M517 583L551 574L584 583L551 597Z" fill="#f3f3f3" /><path d="M517 583L551 597V640L519 626Z" fill="#c4c4c4" /><path d="M584 583L551 597V640L582 626Z" fill="#dedede" />
      <path d="M517 583L551 574L584 583L582 626L551 640L519 626Z" fill="none" stroke="#222" strokeWidth="4" />
      <path d="M616 600H644L630 614Z" fill="#222" />
    </svg>
  );
}

/* ---------- Document tabs ---------- */

const PartStudio = ({ className = "" }: { className?: string }) => (
  <svg className={className} width="24" height="25" viewBox="0 0 24 25" fill="#fff" stroke="#333" strokeWidth="1.500"><path d="M1 5L4 3.500H9L11.500 6V23.500H4.500L1 19Z" /><path d="M1 5L4.500 8.500H11M4.500 8.500V23" fill="none" strokeWidth="1" /><path d="M12.500 3L15 1H20L23 4.500V22.500H16L12.500 18.500Z" /><path d="M12.500 3L16 6H23M16 6V22" fill="none" strokeWidth="1" /></svg>
);

function DocTabs() {
  return (
    <div className={"flex h-[37px] items-start bg-[#d0d0d0] text-[#666] " + UI}>
      <svg className="ml-[11px] mt-[9px]" width="22" height="20" viewBox="0 0 22 20"><path d="M0 1.500H20M15 7H20M15 12H20" stroke="#666" strokeWidth="2.400" /><circle cx="8" cy="10.500" r="5" fill="none" stroke="#666" strokeWidth="2.200" /><path d="M11 14L16 19" stroke="#666" strokeWidth="3" /></svg>
      <svg className="ml-[26px] mt-[9px]" width="18" height="18" viewBox="0 0 18 18"><path d="M0 9H18M9 0V18" stroke="#555" strokeWidth="4" /></svg>
      <div className="ml-[18px] flex h-[33px] w-[250px] items-center rounded-b-[5px] bg-[#e8e8e8] pl-[13.500px] shadow-[0_1px_2px_rgba(0,0,0,0.35)]"><PartStudio className="-mt-[3px]" /><Fit w={46} className="ml-[4px] text-[16px]">Gears</Fit></div>
      <div className="ml-[3px] flex h-[33px] w-[250px] items-center rounded-b-[5px] bg-[#e8e8e8] pl-[13px] shadow-[0_1px_2px_rgba(0,0,0,0.35)]"><PartStudio className="-mt-[3px]" /><Fit w={41} className="ml-[4px] text-[16px]">Plate</Fit></div>
      <div className="ml-[2px] flex h-[35px] w-[250px] items-center rounded-b-[4px] border-b-[3px] border-[#1b5faa] bg-white pl-[14px] pt-[2px] text-[#444]">
        <svg className="-mt-[4px]" width="23" height="24" viewBox="0 0 24 24"><path d="M1.500 2H16.500L22.500 7.500V22.500H7L1.500 18Z" fill="#fff" stroke="#333" strokeWidth="1.800" strokeLinejoin="round" /><path d="M2 2.500H15L17.500 6V17H6L2 13Z" fill="#999" /><path d="M2 2.500L6 6.500H17.500M6 6.500V17" stroke="#555" fill="none" /></svg>
        <Fit w={90} className="ml-[5px] text-[16px]">Assembly 1</Fit>
      </div>
    </div>
  );
}

/* ---------- Taskbar ---------- */

function Wallpaper() {
  return (
    <svg className="absolute inset-0" width="1920" height="48" viewBox="0 0 1920 48" preserveAspectRatio="none">
      <defs>
        <linearGradient id="wp"><stop offset="0" stopColor="#8f8cab" /><stop offset=".13" stopColor="#8f98b4" /><stop offset=".22" stopColor="#9391ad" /><stop offset=".36" stopColor="#8f93ad" /><stop offset=".42" stopColor="#8b92ad" /><stop offset=".5" stopColor="#9392ab" /><stop offset=".64" stopColor="#9cadc8" /><stop offset=".74" stopColor="#9a9cb6" /><stop offset=".85" stopColor="#a5b4cb" /><stop offset="1" stopColor="#9bb0c9" /></linearGradient>
        <linearGradient id="wv" x2="0" y2="1"><stop offset="0" stopColor="#a6c4e0" stopOpacity=".35" /><stop offset="1" stopColor="#7d7490" stopOpacity=".35" /></linearGradient>
        <filter id="wb"><feGaussianBlur stdDeviation=".7" /></filter>
      </defs>
      <rect width="1920" height="48" fill="url(#wp)" />
      <g filter="url(#wb)">
        <path d="M0 6L25 0L70 30L60 48H0Z" fill="#a89fbb" opacity=".5" /><path d="M22 0L65 38L58 48M0 40Q30 36 40 48M235 48Q300 25 320 0" fill="none" stroke="#767394" strokeWidth="2" opacity=".7" />
        <path d="M640 48Q690 18 750 0H800L780 48Z" fill="#8b7c98" opacity=".45" />
        <path d="M1015 48Q1050 20 1108 0Q1060 25 1040 48Z" fill="#7b7493" opacity=".7" />
        <path d="M1362 0Q1410 12 1472 48" fill="none" stroke="#6d6e8c" strokeWidth="2.200" />
        <path d="M1494 48Q1510 30 1526 0H1548Q1536 24 1542 48Z" fill="#8a6e90" opacity=".85" />
        <path d="M1548 0H1770Q1782 25 1776 48H1542Q1536 24 1548 0Z" fill="#a3b0c6" />
        <path d="M1769 0Q1786 24 1780 48H1776Q1778 24 1769 0Z" fill="#8a6e90" stroke="#8a6e90" strokeWidth="2" opacity=".85" />
        <ellipse cx="1598" cy="-2" rx="18" ry="8" fill="#535b71" /><ellipse cx="1710" cy="4" rx="27" ry="15" transform="rotate(12 1710 4)" fill="#566078" />
        <path d="M1637 12Q1652 22 1660 39M1664 15Q1646 22 1634 35" fill="none" stroke="#44546d" strokeWidth="4" />
        <g fill="#c6d3df" opacity=".65"><ellipse cx="1892" cy="32" rx="4" ry="13" /><ellipse cx="1910" cy="36" rx="13" ry="4" transform="rotate(-30 1910 36)" /><ellipse cx="1876" cy="40" rx="13" ry="4" transform="rotate(15 1876 40)" /><ellipse cx="1880" cy="34" rx="13" ry="4" transform="rotate(40 1880 34)" /><ellipse cx="1912" cy="44" rx="12" ry="4" transform="rotate(10 1912 44)" /></g>
        <circle cx="1894" cy="47" r="6" fill="#c6c5a6" />
      </g>
      <rect width="1920" height="48" fill="url(#wv)" />
      <path d="M0 .5H1920" stroke="#75809b" />
    </svg>
  );
}

const BTN = "flex h-[46px] shrink-0 items-center justify-center border border-[#676f8a] shadow-[inset_0_0_0_1px_rgba(255,255,255,0.35)] ";

function Taskbar() {
  return (
    <div className={"relative h-[48px] overflow-hidden " + WIN}>
      <Wallpaper />
      <div className="relative flex h-[48px] items-center">
        <svg className="ml-[13px]" width="34" height="34" viewBox="0 0 34 34"><path d="M0 5L15 2.600V16H0ZM16.500 2.300L33.500 0V16H16.500ZM0 17.500H15V31L0 28.500ZM16.500 17.500H33.500V33.500L16.500 31.200Z" fill="#fff" /></svg>
        <svg className="ml-[31px] -mt-[2px]" width="36" height="36" viewBox="0 0 36 36"><rect width="36" height="36" rx="4" fill="#443e3f" /><rect x="7" y="8" width="22" height="9" rx="4.500" fill="#bdbdbd" /><rect x="17" y="8" width="12" height="9" rx="4.500" fill="#eee" /><rect x="7" y="19" width="22" height="8" rx="4" fill="#777" /><circle cx="11.500" cy="23" r="4" fill="#ddd" /></svg>
        <div className={BTN + "ml-[20px] w-[66px] bg-white/25"}>
          <svg width="40" height="39" viewBox="0 0 40 39"><path d="M2 8V3L14 1L16 4L27 2L29 6L39 5V36H1Z" fill="#e3c461" /><path d="M5 3H13V6H5Z" fill="#3c9a4b" /><path d="M15 6H22V8H15Z" fill="#d23c26" /><path d="M27 8H35V10H27Z" fill="#3a81cc" /><path d="M1 9H20L22 12H39V37H1Z" fill="#f6e38f" /><path d="M4 38V28Q4 24 8 24H34Q38 24 38 28V38H28V31H13V38Z" fill="#7fc6ea" stroke="#4da1cf" /></svg>
        </div>
        <div className="h-[46px] w-[4px] border-y border-r border-[#676f8a] bg-white/30" />
        <svg className="ml-[23px]" width="32" height="40" viewBox="0 0 32 40"><ellipse cx="15" cy="9" rx="8" ry="9" fill="#58090c" /><path d="M8 10Q15 15 23 10Q23 18 15 20Q8 18 8 10Z" fill="#d11c1c" /><path d="M9 11L14 14M21 11L17 14" stroke="#fc3" strokeWidth="2.500" /><path d="M10 19Q16 23 21 19Q31 26 31 35Q16 43 0 35Q0 25 10 19Z" fill="#c40a10" /><circle cx="16" cy="29" r="6" fill="#8c1014" /><path d="M11 27H20M14 30H18V33" stroke="#e99" strokeWidth="1.500" fill="none" /></svg>
        <svg className="ml-[37px]" width="38" height="38" viewBox="0 0 38 38"><circle cx="19" cy="19" r="19" fill="#111" /><circle cx="19" cy="19" r="15" fill="#f9a71b" /><path d="M17 8H21L30 25H24L19 15L15.500 21.500H22L24 25H8Z" fill="#111" /></svg>
        <svg className="ml-[35px] -mt-[1px]" width="38" height="38" viewBox="0 0 38 38"><defs><clipPath id="tile"><rect width="38" height="38" rx="4" /></clipPath></defs><g clipPath="url(#tile)"><rect width="38" height="38" fill="#5282c1" /><path d="M0 0H13Q5 14 0 16Z" fill="#dbe6f3" /><path d="M2 26V38H13V33Q6 31 2 26Z" fill="#f5f8fc" /><path d="M17 0H38V8Q26 2 23 10Q22 17 28 18Q34 18 38 13V22Q32 27 26 26Q16 24 16 12Q16 4 17 0Z" fill="#f5f8fc" /></g></svg>
        <div className={BTN + "ml-[19px] w-[71px] border-white bg-white/40"}>
          <svg width="37" height="37" viewBox="0 0 48 48"><path d="M24 24L3.200 12A24 24 0 0 1 44.800 12Z" fill="#db4437" /><path d="M24 24L24 48A24 24 0 0 1 3.200 12Z" fill="#0f9d58" /><path d="M24 24L44.800 12A24 24 0 0 1 22 48Z" fill="#ffcd40" /><path d="M24 13H45L24 24Z" fill="#db4437" /><path d="M14.500 29.500L24 35L33.500 29.500L22 48Z" fill="#0f9d58" /><path d="M33.500 29.500L44.800 13L40 40L22 48Z" fill="#ffcd40" /><circle cx="24" cy="24" r="11" fill="#f4f4f4" /><circle cx="24" cy="24" r="8.800" fill="#4285f4" /></svg>
        </div>
        <div className={BTN + "ml-[2px] w-[62px] bg-white/20"}>
          <svg width="36" height="30" viewBox="0 0 36 30"><rect width="36" height="30" fill="#c6cad1" /><rect x="1" y="4" width="34" height="25" fill="#000" /><path d="M25 2H34" stroke="#555" strokeWidth="1.500" strokeDasharray="2 1" /><text x="3" y="13" fontSize="8" fill="#fff" className="font-['Liberation_Mono',monospace]">C:\_</text></svg>
        </div>
        <div className="h-[46px] w-[4px] border-y border-r border-[#676f8a] bg-white/25" /><div className="h-[46px] w-[4px] border-y border-r border-[#676f8a] bg-white/25" />
        <div className={BTN + "ml-[2px] w-[71px] bg-white/20"}>
          <svg width="40" height="40" viewBox="0 0 40 40"><rect width="40" height="40" fill="#fdfdfd" /><path d="M9 10Q12 2 20 0Q24 1 22 8Q17 15 13 13Q9 13 9 10Z" fill="#707070" /><path d="M13 13Q10 22 13 26T20 36Q34 40 39 27M3 19L11 25M12 24L20 19M14 28L24 25M7 37L14 29M13 37L20 34M2 25L5 19" fill="none" stroke="#8a8a8a" strokeWidth="1.800" /></svg>
        </div>
        <div className={BTN + "ml-[2px] w-[71px] bg-white/15"}>
          <svg width="40" height="40" viewBox="0 0 40 40"><defs><clipPath id="ball"><circle cx="20" cy="20" r="20" /></clipPath></defs><circle cx="20" cy="20" r="20" fill="#3a3d3f" /><g clipPath="url(#ball)" fill="none" stroke="#8d9193" strokeWidth="1.300">{[-30, -25, -20, -15, -10, -5, 0, 5, 10, 15, 20].map((o) => <path key={o} d={`M-2 ${o + 6}Q10 ${o + 8} 20 ${o + 17}T44 ${o + 34}`} />)}<path d="M4 13Q14 15 24 25" stroke="#e6e8e9" strokeWidth="1.800" /></g></svg>
        </div>
        <div className={BTN + "ml-[2px] w-[71px] bg-white/15"}>
          <svg width="40" height="40" viewBox="0 0 40 40"><rect x="5" y=".5" width="30" height="39" fill="#b3453f" stroke="#000" /><path d="M15 0H25V22H15Z" fill="#861210" /><path d="M6 5L15 8V14L7 12ZM34 5L25 8V14L33 12Z" fill="#f3e8b0" stroke="#000" /><path d="M10 8h4v4h-4zM26 8h4v4h-4z" fill="#000" /><path d="M6 23L17 22L20 27L23 22L34 23V30L24 31H16L6 30Z" fill="#fbfbe8" /><path d="M13 21H27L20 28ZM6 29L12 33L9 38H6ZM34 29L28 33L31 38H34Z" fill="#000" /><path d="M13 32H27L30 39H10Z" fill="#f7f3d4" /><path d="M1 25L12 27M1 30L12 28M39 25L28 27M39 30L28 28" stroke="#222" /></svg>
        </div>
        <div className="ml-auto flex items-center">
          <svg width="11" height="8" viewBox="0 0 11 8"><path d="M5.500 1L10.500 7H.5Z" fill="#fff" stroke="#667" strokeWidth=".8" /></svg>
          <svg className="ml-[18px]" width="17" height="18" viewBox="0 0 17 18"><path d="M.5 13h3v4h-3zM3.500 10h3v7h-3zM7 7h3v10H7zM10 4h3v13h-3zM13.500 1h3v16h-3z" fill="#fff" stroke="#556" strokeWidth=".9" /></svg>
          <svg className="ml-[14px]" width="18" height="20" viewBox="0 0 18 20"><path d="M.5 6H4L10 .8V19L4 14H.5Z" fill="#fff" stroke="#556" /><path d="M4 6V14" stroke="#556" /><path d="M14 6Q17 10 14 14" fill="none" stroke="#fff" strokeWidth="1.400" /></svg>
          <svg className="ml-[14px]" width="20" height="20" viewBox="0 0 20 20"><circle cx="10" cy="10" r="9.300" fill="#cfd9e4" stroke="#4a5568" strokeWidth="1.400" /><path d="M6 5.500L14 14.500M14 5.500L6 14.500" stroke="#4a5568" strokeWidth="2.600" /></svg>
          <div className="ml-[17px] mr-[21px] flex flex-col text-[15px] leading-[21px] text-white">
            <Fit w={73}>下午 05:33</Fit>
            <Fit w={74}>2017/6/27</Fit>
          </div>
        </div>
      </div>
    </div>
  );
}

export default function App() {
  return (
    <div className="flex h-[1080px] w-[1920px] flex-col overflow-hidden bg-white">
      <TabStrip />
      <AddressBar />
      <DocHeader />
      <ToolBar />
      <main className="flex h-[815px] shrink-0 items-start overflow-hidden">
        <Sidebar />
        <Viewport />
        <ViewCube />
      </main>
      <DocTabs />
      <Taskbar />
    </div>
  );
}
